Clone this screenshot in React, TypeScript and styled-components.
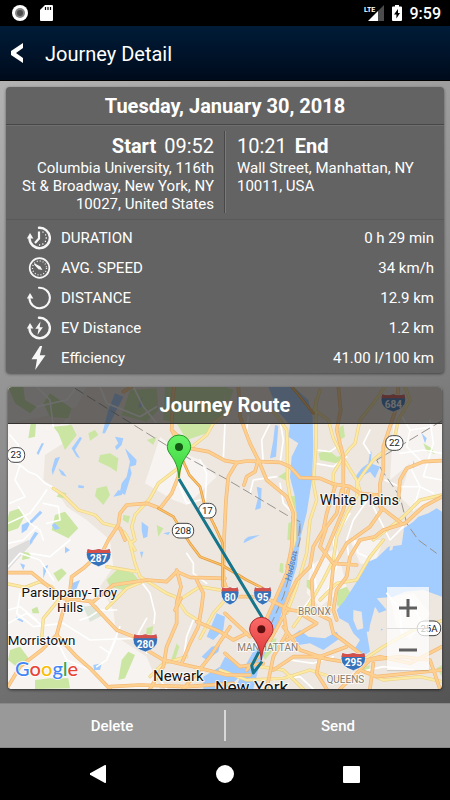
import React from "react";
import styled, { createGlobalStyle, css } from "styled-components";

const GlobalStyle = createGlobalStyle`
  * { box-sizing: border-box; }
  body { margin: 0; background: #000; font-family: Roboto, "Liberation Sans", sans-serif; }
  button { font-family: inherit; }
`;

const Screen = styled.div`
  min-height: 100vh;
  display: flex;
  flex-direction: column;
  color: #fff;
  background: #000;
`;

const StatusBar = styled.div`
  height: 26px;
  padding: 0 9px 0 12px;
  display: flex;
  align-items: center;
  justify-content: space-between;
  background: #000;
`;

const StatusGroup = styled.div<{ $gap: number }>`
  display: flex;
  align-items: center;
  gap: ${(p) => p.$gap}px;
  font-size: 16px;
  font-weight: 500;
  svg { display: block; }
`;

const AppBar = styled.header`
  height: 55px;
  display: flex;
  align-items: center;
  gap: 21px;
  padding: 0 9px;
  background: linear-gradient(#001c38, #000b1c);
  border-bottom: 1px solid #000;
`;

const BackButton = styled.button`
  width: 15px;
  padding: 0;
  border: 0;
  background: none;
  svg { display: block; }
`;

const AppTitle = styled.h1`
  margin: 0;
  padding-top: 2px;
  font-size: 20px;
  font-weight: 400;
  line-height: 24px;
`;

const Content = styled.main`
  flex: 1;
  display: flex;
  flex-direction: column;
  gap: 14px;
  padding: 6px 6px 14px;
  background: linear-gradient(155deg, #b2b2b2 0%, #8e8e8e 45%, #545454 100%);
`;

const SummaryCard = styled.section`
  border-radius: 4px;
  background: #636363;
  box-shadow: 0 1px 3px rgba(0, 0, 0, 0.5);
`;

const cardTitle = css`
  margin: 0;
  display: flex;
  align-items: center;
  justify-content: center;
  font-size: 20px;
  font-weight: 700;
`;

const SummaryTitle = styled.h2`
  ${cardTitle}
  height: 38px;
  border-bottom: 1px solid #474747;
`;

const Trip = styled.div`
  display: grid;
  grid-template-columns: 1fr 1fr;
  padding: 5px 0 6px;
  border-top: 1px solid #6f6f6f;
  border-bottom: 1px solid #5a5a5a;
`;

const Stop = styled.div<{ $side: "start" | "end" }>`
  min-height: 82px;
  padding: 3px ${(p) => (p.$side === "start" ? 10 : 11)}px 0;
  text-align: ${(p) => (p.$side === "start" ? "right" : "left")};
  border-left: ${(p) => (p.$side === "end" ? "1px solid #7a7a7a" : "0")};
  border-right: ${(p) => (p.$side === "start" ? "1px solid #484848" : "0")};
`;

const StopTime = styled.p`
  margin: 0;
  font-size: 20px;
  line-height: 24px;
  span + strong, strong + span { margin-left: 8px; }
`;

const Address = styled.p`
  margin: 1px 0 0;
  font-size: 15px;
  line-height: 18px;
`;

const Stats = styled.table`
  width: 100%;
  padding: 3px 10px 0 21px;
  border-spacing: 0;
  font-size: 15px;
  th, td { height: 30px; padding: 0; font-weight: 400; }
  th { text-align: left; }
  td { text-align: right; }
`;

const StatLabel = styled.span`
  display: flex;
  align-items: center;
  gap: 10px;
  svg { flex: none; }
`;

const MapCard = styled.section`
  flex: 1;
  min-height: 302px;
  margin: 0 2px;
  position: relative;
  display: flex;
  border-radius: 4px;
  overflow: hidden;
  box-shadow: 0 1px 3px rgba(0, 0, 0, 0.6);
`;

const MapDrawing = styled.svg`
  display: block;
  width: 100%;
  min-width: 0;
  height: auto;
  min-height: 302px;
  font-family: Roboto, "Liberation Sans", sans-serif;
`;

const MapTitle = styled.h2`
  ${cardTitle}
  position: absolute;
  inset: 0 0 auto 0;
  height: 37px;
  background: rgba(36, 36, 36, 0.67);
  border-bottom: 1px solid #34322f;
`;

const ZoomControls = styled.div`
  position: absolute;
  right: 13px;
  bottom: 19px;
  width: 42px;
  background: rgba(255, 255, 255, 0.75);
  box-shadow: 0 1px 1px rgba(0, 0, 0, 0.12);
`;

const ZoomButton = styled.button`
  width: 100%;
  height: 41px;
  padding: 0;
  display: flex;
  align-items: center;
  justify-content: center;
  border: 0;
  background: none;
  & + & { height: 42px; border-top: 1px solid #dcdcdc; }
`;

const ActionBar = styled.div`
  height: 45px;
  padding: 6px 0;
  display: flex;
  background: #999;
  border-top: 1px solid #888;
  border-bottom: 1px solid #858585;
`;

const Action = styled.button`
  flex: 1;
  padding: 0;
  border: 0;
  background: none;
  color: #fff;
  font-size: 15px;
  font-weight: 500;
  & + & { border-left: 2px solid #d8d8d8; }
`;

const NavBar = styled.nav`
  height: 52px;
  padding: 0 35px;
  display: grid;
  grid-template-columns: repeat(3, 1fr);
  background: #000;
`;

const NavButton = styled.button`
  padding: 0;
  display: flex;
  align-items: center;
  justify-content: center;
  border: 0;
  background: none;
`;

const W = "#f7f7f7";

const BOLT = "M13 0 4.500 13.200h5.500L8.200 24 18.500 9.200h-5.700L15.200 0z";
const ring = "M12 1.800a10.200 10.200 0 1 1-9.500 11";

const StatIcon = ({ kind }: { kind: string }) => (
  <svg width="24" height="24" viewBox="0 0 24 24" fill="none" stroke={W} aria-hidden="true">
    {(kind === "duration" || kind === "distance" || kind === "ev") && (
      <>
        <path d={ring} strokeWidth={kind === "distance" ? 2.1 : 2.4} strokeLinecap="round" />
        <path d="M-.2 12.500 3 7l3.400 5.500z" fill={W} stroke="none" />
      </>
    )}
    {kind === "duration" && (
      <>
        <path d="M12 5.500v7l-4 4.500" strokeWidth="2.200" />
        <path d="M15.400 6.200h1.200M18 8.800h1.200M18.600 12h1.200M17.800 15.400H19M15.200 18h1.200M12 19h1.200" strokeWidth="1.300" />
      </>
    )}
    {kind === "speed" && (
      <>
        <circle cx="12.500" cy="12" r="9.800" strokeWidth="1.700" />
        <circle cx="12.500" cy="12" r="7" strokeWidth="1.300" strokeDasharray="0.900 2.100" />
        <path d="m7.500 8 5.500 3 1.200 2.200-2.400-.6z" strokeWidth="1.200" fill={W} />
      </>
    )}
    {kind === "ev" && <path d="m13.500 5.500-5.200 7.300h3.200L10.500 19l5.400-7.800h-3.200z" fill={W} stroke="none" />}
    {kind === "efficiency" && <path d={BOLT} fill={W} stroke="none" />}
  </svg>
);

const stats = [
  { kind: "duration", label: "DURATION", value: "0 h 29 min" },
  { kind: "speed", label: "AVG. SPEED", value: "34 km/h" },
  { kind: "distance", label: "DISTANCE", value: "12.9 km" },
  { kind: "ev", label: "EV Distance", value: "1.2 km" },
  { kind: "efficiency", label: "Efficiency", value: "41.00 l/100 km" },
];

/* Map geometry: three map units to one pixel. */
const urban = [
  "M24 130 180 135 215 100 190 190 135 225 130 300 165 325 200 380 260 420 330 480 340 560 300 620 340 690 350 770 440 830 480 927H24Z",
  "M480 170 540 215 600 240 650 290 560 375 520 360 435 310Z",
  "M24 20H260L230 80 180 100 24 130Z",
  "M1180 130 1326 120V350L1240 390 1200 350 1230 250 1170 300Z",
  "M1050 480 1150 480 1120 560 1080 550Z",
  "M930 560 1010 500 1040 620 960 680 920 640Z",
  "M1170 650 1240 640 1290 700 1230 780 1190 740Z",
];
const greens = [
  "M24 20 70 20 75 60 110 80 90 100 45 70Z",
  "M390 30 470 25 475 90 440 125 365 105 380 60Z",
  "M495 20 675 20 672 100 620 160 560 180 530 130 490 120Z",
  "M675 20 700 30 690 60 675 70Z",
  "M150 40 215 85 205 115 150 110 130 70Z",
  "M160 140 215 135 230 165 195 210 175 160Z",
  "M92 130 108 132 105 170 85 175Z",
  "M265 160 285 150 295 165 270 182Z",
  "M300 225 330 220 355 235 350 275 330 262 295 245Z",
  "M290 325 320 318 330 345 310 375 285 348Z",
  "M180 335 200 340 190 355 170 350Z",
  "M28 395 60 385 75 405 55 445 24 455V410Z",
  "M165 405 195 395 235 445 205 475 155 450Z",
  "M370 405 390 408 385 430 368 420Z",
  "M440 180 470 170 460 195Z",
  "M470 435 490 445 475 470Z",
  "M320 600 355 565 400 580 420 605 370 630 330 620Z",
  "M160 580 185 565 200 580 175 605Z",
  "M95 688 112 680 118 700 98 700Z",
  "M30 810 60 800 90 840 50 860 24 840Z",
  "M385 815 405 825 375 895 355 900 365 840Z",
  "M105 900 150 895 205 895 210 925 105 927Z",
  "M530 790 538 800 522 850 510 850Z",
  "M440 745 460 738 455 765 438 770Z",
  "M70 515 92 520 90 535 66 540Z",
  "M955 220 985 210 1010 230 1040 225 1010 250 960 240Z",
  "M1015 145 1030 135 1035 170 1020 180Z",
  "M835 290 865 270 865 305Z",
  "M870 350 895 345 890 390 872 390Z",
  "M865 430 885 420 882 480 862 480Z",
  "M1270 190 1295 205 1305 222 1280 215Z",
  "M1015 630 1040 620 1052 640 1025 685 1010 675Z",
  "M920 600 940 600 935 635 920 620Z",
  "M840 550 850 550 850 580 838 575Z",
  "M800 780 830 775 820 810 795 840 785 820Z",
  "M1085 865 1110 855 1105 880Z",
  "M1310 865 1326 855V890Z",
];
const waters = [
  "M805 20H880L925 60 938 110 940 200 936 300 920 400 902 470 890 560 865 640 838 720 810 790 780 850 760 927H705L740 850 785 770 825 660 855 590 875 500 890 410 885 350 870 292 875 230 895 190 865 170 870 135 835 95Z",
  "M1326 395 1310 385 1285 400 1255 410 1240 425 1212 445 1205 495 1165 500 1130 535 1105 545 1070 605 1035 660 1010 690 1018 715 1045 730 1060 760 1080 780 1065 805 1090 828 1110 815 1100 755 1150 750 1120 730 1135 700 1160 690 1130 655 1180 650 1215 635 1270 630 1326 650Z",
  "M880 765 900 750 925 770 975 775 1010 755 1020 775 970 810 930 790 895 795Z",
  "M675 830 660 860 610 890 610 927H680L740 870Z",
  "M650 700 675 710 670 750 640 780 620 770Z",
  "M345 40 370 50 345 100 315 160 307 160 325 90Z",
  "M420 60 427 50 425 80 415 85Z",
  "M345 170 370 175 365 195 350 210 345 200 355 190Z",
  "M375 205 390 220 410 240 408 255 390 260 395 280 375 345 360 335 365 310 380 290 390 245Z",
  "M240 170 246 175 225 210 240 235 230 230 215 205Z",
  "M125 190 132 190 115 225 110 220Z",
  "M165 235 180 230 158 285 155 270Z",
  "M175 265 190 275 200 290 185 285Z",
  "M235 315 253 318 250 325 235 323Z",
  "M120 392 127 398 95 430 85 428Z",
  "M65 435 95 420 80 450 65 460Z",
  "M105 455 115 460 90 495 90 480Z",
  "M155 435 165 430 180 445 165 450Z",
  "M355 330 370 335 365 345 340 350Z",
  "M425 425 445 440 442 470 430 475 425 450Z",
  "M490 460 510 455 505 465Z",
  "M825 135 835 138 828 230 810 235 820 180Z",
  "M770 320 785 325 782 385 765 390 775 350Z",
  "M745 470 780 465 730 490 735 478Z",
  "M1085 265 1105 250 1110 215 1115 215 1112 250 1140 260 1125 295 1110 275 1065 300 1070 285Z",
  "M1240 240 1245 260 1238 265Z",
  "M1265 160 1280 175 1275 190Z",
  "M130 560 145 555 130 595Z",
  "M215 610 240 600 230 625 210 645Z",
  "M60 550 75 555 70 570Z",
  "M280 855 305 850 300 870 282 870Z",
  "M195 500 210 510 195 520Z",
  "M420 515 430 515 425 535Z",
  "M635 800 660 795 655 815 620 840 605 830Z",
  "M50 710 70 722 68 727 48 717Z",
];
const islands = [
  "M1060 690 1085 695 1090 745 1072 750 1060 720Z",
  "M1125 680 1150 720 1140 760 1105 770 1110 735Z",
  "M1170 500 1180 495 1177 510 1168 512Z",
];
const minor = [
  "M24 240 60 255 85 275 110 285 135 310 165 325", "M30 165 55 195 50 235", "M60 255 45 300 75 350 30 370", "M24 430 90 400 120 360 140 330",
  "M130 370 175 380 180 420 140 430", "M55 380 90 430 120 450 130 480", "M24 490 70 480 110 440", "M90 520 150 530 210 480",
  "M110 20 150 60 160 140", "M230 20 200 60 110 80", "M300 20 320 70 420 110 470 80", "M400 20 430 80 470 130",
  "M24 560 60 520 120 540 160 600", "M60 640 50 700 100 740 190 730", "M24 730 80 700 130 740", "M125 770 180 800 200 840 270 870",
  "M190 730 270 780 400 775", "M350 770 330 820 300 800", "M360 740 320 840 290 860", "M240 720 270 710 300 690 350 690",
  "M420 600 450 640 465 700 462 730", "M440 715 415 760 440 820", "M675 130 670 235", "M755 200 740 150 745 110",
  "M790 250 785 180 810 130", "M840 250 850 180 840 120", "M750 340 760 300 830 290", "M840 310 850 370 880 400", "M530 295 560 370 600 360",
  "M600 240 620 280 615 380", "M950 210 990 215 1025 190", "M945 250 1000 260 1040 230", "M1050 400 1000 480 1010 560 980 640", "M1110 150 1090 190 1110 220",
  "M1110 350 1060 420 1040 480 1050 560", "M1120 380 1170 480 1210 440", "M1200 100 1230 150 1300 140", "M1230 150 1220 200 1260 240", "M1200 220 1270 210 1326 220",
  "M1290 120 1300 190 1270 290 1326 300", "M1235 270 1260 320 1240 390", "M1155 300 1200 320 1260 320 1300 340", "M1160 640 1200 690 1205 760", "M1230 650 1260 720 1300 730",
  "M1060 470 1075 520 1100 530", "M560 520 580 550 580 580 620 610", "M580 720 560 770 550 840", "M870 840 940 850 1000 830", "M820 900 900 890 940 927", "M935 530 950 630 900 700",
  "M1060 880 1150 860 1240 870", "M490 840 480 900 500 927", "M24 690 60 680 110 720",
];
const yellows = [
  "M160 325 190 345 235 390 285 405 310 430 350 440 375 460 405 510",
  "M540 260 475 310 450 355 405 405 395 440 405 480 390 490 405 550 420 590 500 640 525 650 560 700 600 725",
  "M570 205 620 165 640 130 690 90", "M24 612 75 622 120 605 155 620 180 655 130 715 125 775",
  "M320 560 410 575", "M320 685 380 625 440 600", "M780 70 825 100 860 150 862 200 862 300 870 350 885 400 885 480 860 560",
  "M948 60 948 200 940 310 950 360 930 420 920 520 890 620 860 700", "M950 95 985 120 1000 175 1030 235 1070 300 1085 350",
  "M1155 20 1120 70 1080 120 1065 190 1050 205 1030 230 1000 280 1000 320", "M1215 20 1230 60 1195 120 1180 190 1120 240 1090 280 1070 310 1070 340",
  "M1326 345 1260 360 1210 410 1160 450 1120 480", "M1075 340 1040 400 1010 470 1000 540 970 600 930 670 880 740",
  "M1150 480 1110 530 1070 600 1010 610 960 660", "M600 775 640 700 675 660", "M530 665 600 620 660 630", "M1090 840 1150 800 1240 750 1326 722", "M1080 870 1150 900 1260 890 1326 905",
  "M780 860 850 870 910 927", "M660 870 740 900 850 895 930 870 1020 900", "M960 30 940 95", "M450 890 490 850 560 830",
];
const highways = [
  "M522 20 518 60 515 150 530 180 540 250 535 290 515 340 480 385 440 370 380 375 360 400 355 435 325 480 310 510 250 565 215 590 208 650 190 690 170 765 125 810 60 860 24 920",
  "M520 155 570 205 625 215 675 242 710 248 740 243 840 247 870 260 900 293 960 295 1000 312 1050 320 1080 340 1130 345",
  "M24 578 95 578 140 615 190 655 280 665 340 615 440 600 500 605 530 575 570 592 675 595",
  "M270 665 350 750 400 770 440 810 490 840 600 865 680 885 750 885",
  "M530 570 543 620 530 670 530 730 500 800 490 860 450 927",
  "M590 600 610 640 605 680 595 740 570 790 545 850", "M543 655 525 690", "M590 725 660 755 700 780 740 760",
  "M170 765 230 830 270 865 330 927", "M690 740 630 830 590 880 550 927",
  "M715 20 720 110 750 190 775 240 800 300 860 350 880 400 875 500 860 580 825 660 780 760",
  "M775 240 765 275 740 290 732 315", "M710 248 685 290 678 360 672 480 670 600 690 650 750 650 800 655 870 690 950 700 990 720 1000 760 1040 790 1080 820 1080 870 1130 890 1326 870",
  "M1015 20 1022 90 1010 150 1030 230 1030 300 1030 340", "M1005 320 980 400 970 450 940 500 930 560 890 600 870 640 850 690 860 760 820 830 800 927",
  "M1025 330 1010 400 980 440 960 500 1000 550 1070 555", "M1195 20 1190 80 1150 200 1150 270 1140 310 1140 380 1205 430",
  "M1326 242 1270 245 1220 265 1200 300 1195 360", "M1326 350 1270 380 1215 430 1150 450 1125 470 1080 480 1050 530 1040 590 1010 630 1000 690 1010 720",
  "M1130 345 1145 390 1110 440 1040 490 1000 560 985 700", "M1045 330 1030 390 980 510 935 600 940 690",
  "M860 690 800 800 740 870", "M850 740 900 810 960 830 1040 800", "M900 700 950 730 900 760 860 780", "M960 830 950 880 980 927",
  "M820 870 880 830 940 830 1060 850 1140 830 1230 850 1326 800", "M1020 927 1080 870 1110 840 1200 830 1290 840 1320 927", "M1120 850 1110 927",
  "M675 700 750 770", "M675 820 720 860 790 850", "M330 920 420 915 560 920 700 910", "M360 445 375 480", "M395 20 370 35",
];
const arterials = [
  "M550 245 568 285 600 320 615 380 645 440 668 490 668 620",
  "M475 385 520 410 550 460 570 490 600 530 665 555 740 600 790 625",
  "M875 20 900 50 940 100",
];

const Paths = ({ list, color, width, edge }: { list: string[]; color: string; width: number; edge?: string }) => (
  <g fill="none" strokeLinejoin="round" strokeLinecap="round">
    {edge && list.map((d) => <path key={"e" + d} d={d} stroke={edge} strokeWidth={width + 4} />)}
    {list.map((d) => <path key={d} d={d} stroke={color} strokeWidth={width} />)}
  </g>
);

const Areas = ({ list, color }: { list: string[]; color: string }) => (
  <g fill={color}>{list.map((d) => <path key={d} d={d} />)}</g>
);

const Shield = ({ x, y, w, label }: { x: number; y: number; w: number; label: string }) => (
  <g transform={`translate(${x} ${y})`}>
    <path d={`M${-w / 2 + 4} -26Q${-w / 4} -20 0 -26Q${w / 4} -20 ${w / 2 - 4} -26L${w / 2} -10Q${w / 2} 16 0 27Q${-w / 2} 16 ${-w / 2} -10Z`} fill="#3672b9" stroke="#fff" strokeWidth="2" />
    <path d={`M${-w / 2 + 4} -26Q${-w / 4} -20 0 -26Q${w / 4} -20 ${w / 2 - 4} -26L${w / 2 - 1} -14H${-w / 2 + 1}Z`} fill="#d4504b" />
    <text y="14" textAnchor="middle" fontSize="30" fontWeight="700" fill="#fff">{label}</text>
  </g>
);

const RouteBadge = ({ x, y, w, label }: { x: number; y: number; w: number; label: string }) => (
  <g transform={`translate(${x} ${y})`}>
    <rect x={-w / 2} y="-22" width={w} height="44" rx="20" fill="#fff" stroke="#444" strokeWidth="3" />
    <text y="10" textAnchor="middle" fontSize="29" fill="#222">{label}</text>
  </g>
);

const Place = ({ x, y, size, color = "#111", children }: { x: number; y: number; size: number; color?: string; children: string }) => (
  <text x={x} y={y} fontSize={size} fill={color} textAnchor="middle" stroke="#fff" strokeWidth="6" strokeLinejoin="round" strokeOpacity="0.8" paintOrder="stroke">
    {children}
  </text>
);

const Pin = ({ x, y, from, to, edge, dot, id }: { x: number; y: number; from: string; to: string; edge: string; dot: string; id: string }) => (
  <g transform={`translate(${x} ${y})`}>
    <linearGradient id={id} x1="0" y1="0" x2="0" y2="1">
      <stop offset="0" stopColor={from} />
      <stop offset="1" stopColor={to} />
    </linearGradient>
    <path d="M0 93C-3 58-12 42-24 25C-31 15-35 9-35-1A35 35 0 0 1 35-1C35 9 31 15 24 25C12 42 3 58 0 93Z" fill={`url(#${id})`} stroke={edge} strokeWidth="3" />
    <circle r="12" fill={dot} />
  </g>
);

const google: [string, string][] = [["G", "#4285f4"], ["o", "#ea4335"], ["o", "#fbbc05"], ["g", "#4285f4"], ["l", "#34a853"], ["e", "#ea4335"]];

const JourneyMap = () => (
  <MapDrawing viewBox="24 21 1302 906" preserveAspectRatio="xMidYMid slice" role="img" aria-label="Journey route map">
    <rect x="-2000" y="0" width="5400" height="1000" fill="#eee7df" />
    <Areas list={urban} color="#f6f3f0" />
    <path d="M24 510 85 480 100 485 60 530 24 570Z" fill="#dedddc" />
    <path d="M250 680 290 675 310 705 270 725Z" fill="#dde5d8" />
    <Areas list={greens} color="#cbe6a3" />
    <Areas list={waters} color="#a3ccff" />
    <Areas list={islands} color="#eee7df" />
    <Paths list={minor} color="#ffffff" width={5} />
    <g fill="none" stroke="#97948f" strokeWidth="3" strokeDasharray="30 12">
      <path d="M225 25 530 215 675 295 860 405 900 425 895 480" />
      <path d="M900 430 900 480 850 650 770 830" />
      <path d="M1326 122 1210 192 1130 240 1145 270 1200 350 1220 430 1255 480 1310 520" />
    </g>
    <Paths list={yellows} color="#fdeaa2" width={6} edge="#ecd28c" />
    <Paths list={highways} color="#fdd08f" width={7} edge="#f3b878" />
    <Paths list={arterials} color="#fcc46d" width={4} edge="#e29a3c" />
    <text transform="translate(872 604) rotate(-77)" fontSize="27" fontStyle="italic" fill="#4c82c0">Hudson</text>

    <Place x={1078} y={376} size={43}>White Plains</Place>
    <Place x={208} y={650} size={40}>Parsippany-Troy</Place>
    <Place x={210} y={697} size={40}>Hills</Place>
    <Place x={125} y={794} size={40}>Morristown</Place>
    <Place x={535} y={902} size={45}>Newark</Place>
    <Place x={755} y={938} size={52}>New York</Place>
    <Place x={943} y={704} size={30} color="#857e70">BRONX</Place>
    <Place x={803} y={813} size={30} color="#857e70">MANHATTAN</Place>
    <Place x={1036} y={910} size={30} color="#857e70">QUEENS</Place>

    <Shield x={1180} y={69} w={74} label="684" />
    <Shield x={296} y={533} w={74} label="287" />
    <Shield x={436} y={789} w={74} label="280" />
    <Shield x={690} y={648} w={54} label="80" />
    <Shield x={788} y={648} w={54} label="95" />
    <Shield x={1060} y={845} w={74} label="295" />
    <RouteBadge x={48} y={225} w={52} label="23" />
    <RouteBadge x={1183} y={189} w={52} label="22" />
    <RouteBadge x={622} y={392} w={52} label="17" />
    <RouteBadge x={549} y={452} w={64} label="208" />
    <RouteBadge x={1287} y={745} w={70} label="25A" />

    <path d="M537 297 788 715M777 815 755 857 760 879 786 845" fill="none" stroke="#16758a" strokeWidth="9" strokeLinejoin="round" />
    <Pin id="pinStart" x={537} y={201} from="#68f568" to="#38cf38" edge="#279727" dot="#145c14" />
    <Pin id="pinEnd" x={784} y={748} from="#fb6b69" to="#dc3434" edge="#a82b2b" dot="#5d0f0f" />

    <text x="45" y="887" fontSize="60" fontWeight="500" fontFamily="Lato, Roboto, sans-serif" stroke="#fff" strokeWidth="5" paintOrder="stroke">
      {google.map(([letter, fill], i) => (
        <tspan key={i} fill={fill}>{letter}</tspan>
      ))}
    </text>
  </MapDrawing>
);

export default function App() {
  return (
    <Screen>
      <GlobalStyle />
      <StatusBar>
        <StatusGroup $gap={12}>
          <svg width="16" height="16" viewBox="0 0 16 16" aria-hidden="true">
            <circle cx="8" cy="8" r="8" fill="#fff" />
            <circle cx="8" cy="8" r="5" fill="#858585" />
            <circle cx="8" cy="8" r="3" fill="#4c4c4c" />
          </svg>
          <svg width="13" height="16" viewBox="0 0 13 16" aria-hidden="true">
            <path d="M5 0h7a1 1 0 0 1 1 1v14a1 1 0 0 1-1 1H1a1 1 0 0 1-1-1V5z" fill="#fff" />
            <path d="M5.500 2v3M8 2v3M10.500 2v3" stroke="#000" strokeWidth="1.200" />
          </svg>
        </StatusGroup>
        <StatusGroup $gap={8}>
          <svg width="20" height="16" viewBox="0 0 20 16" aria-label="LTE">
            <path d="M20 0v16h-6V6z" fill="#4c4c4c" />
            <path d="M4 16 14 6v10z" fill="#fff" />
            <text x="0" y="7" fontSize="7" fontWeight="700" fill="#fff" textRendering="geometricPrecision">LTE</text>
          </svg>
          <svg width="10" height="16" viewBox="0 0 10 16" aria-hidden="true">
            <path d="M3 0h4v1.500h2a1 1 0 0 1 1 1V15a1 1 0 0 1-1 1H1a1 1 0 0 1-1-1V2.500a1 1 0 0 1 1-1h2z" fill="#fff" />
            <path d="M6 4 2 9.500h2.400V13.500L8 8H6z" fill="#000" />
          </svg>
          <span>9:59</span>
        </StatusGroup>
      </StatusBar>

      <AppBar>
        <BackButton aria-label="Back">
          <svg width="15" height="20" viewBox="0 0 15 20">
            <path d="M14 0v5L7 10l7 5v5L2 12V8z" fill="#fff" />
          </svg>
        </BackButton>
        <AppTitle>Journey Detail</AppTitle>
      </AppBar>

      <Content>
        <SummaryCard>
          <SummaryTitle>Tuesday, January 30, 2018</SummaryTitle>
          <Trip>
            <Stop $side="start">
              <StopTime><strong>Start</strong><span>09:52</span></StopTime>
              <Address>Columbia University, 116th St&nbsp;&amp; Broadway, New York, NY 10027, United States</Address>
            </Stop>
            <Stop $side="end">
              <StopTime><span>10:21</span><strong>End</strong></StopTime>
              <Address>Wall Street, Manhattan, NY 10011, USA</Address>
            </Stop>
          </Trip>
          <Stats>
            <tbody>
              {stats.map((s) => (
                <tr key={s.kind}>
                  <th scope="row">
                    <StatLabel><StatIcon kind={s.kind} />{s.label}</StatLabel>
                  </th>
                  <td>{s.value}</td>
                </tr>
              ))}
            </tbody>
          </Stats>
        </SummaryCard>

        <MapCard>
          <JourneyMap />
          <MapTitle>Journey Route</MapTitle>
          <ZoomControls>
            <ZoomButton aria-label="Zoom in">
              <svg width="20" height="20" viewBox="0 0 20 20"><path d="M1 10h18M10 1v18" stroke="#5f5f5f" strokeWidth="3" /></svg>
            </ZoomButton>
            <ZoomButton aria-label="Zoom out">
              <svg width="20" height="20" viewBox="0 0 20 20"><path d="M1 10h18" stroke="#5f5f5f" strokeWidth="3" /></svg>
            </ZoomButton>
          </ZoomControls>
        </MapCard>
      </Content>

      <ActionBar>
        <Action>Delete</Action>
        <Action>Send</Action>
      </ActionBar>

      <NavBar>
        <NavButton aria-label="Back">
          <svg width="16" height="18" viewBox="0 0 16 18"><path d="M16 1v16a1 1 0 0 1-1.500.8L.5 10a1 1 0 0 1 0-2L14.500.2A1 1 0 0 1 16 1z" fill="#fff" /></svg>
        </NavButton>
        <NavButton aria-label="Home">
          <svg width="18" height="18" viewBox="0 0 18 18"><circle cx="9" cy="9" r="9" fill="#fff" /></svg>
        </NavButton>
        <NavButton aria-label="Recent apps">
          <svg width="17" height="17" viewBox="0 0 17 17"><rect width="17" height="17" rx="1" fill="#fff" /></svg>
        </NavButton>
      </NavBar>
    </Screen>
  );
}
